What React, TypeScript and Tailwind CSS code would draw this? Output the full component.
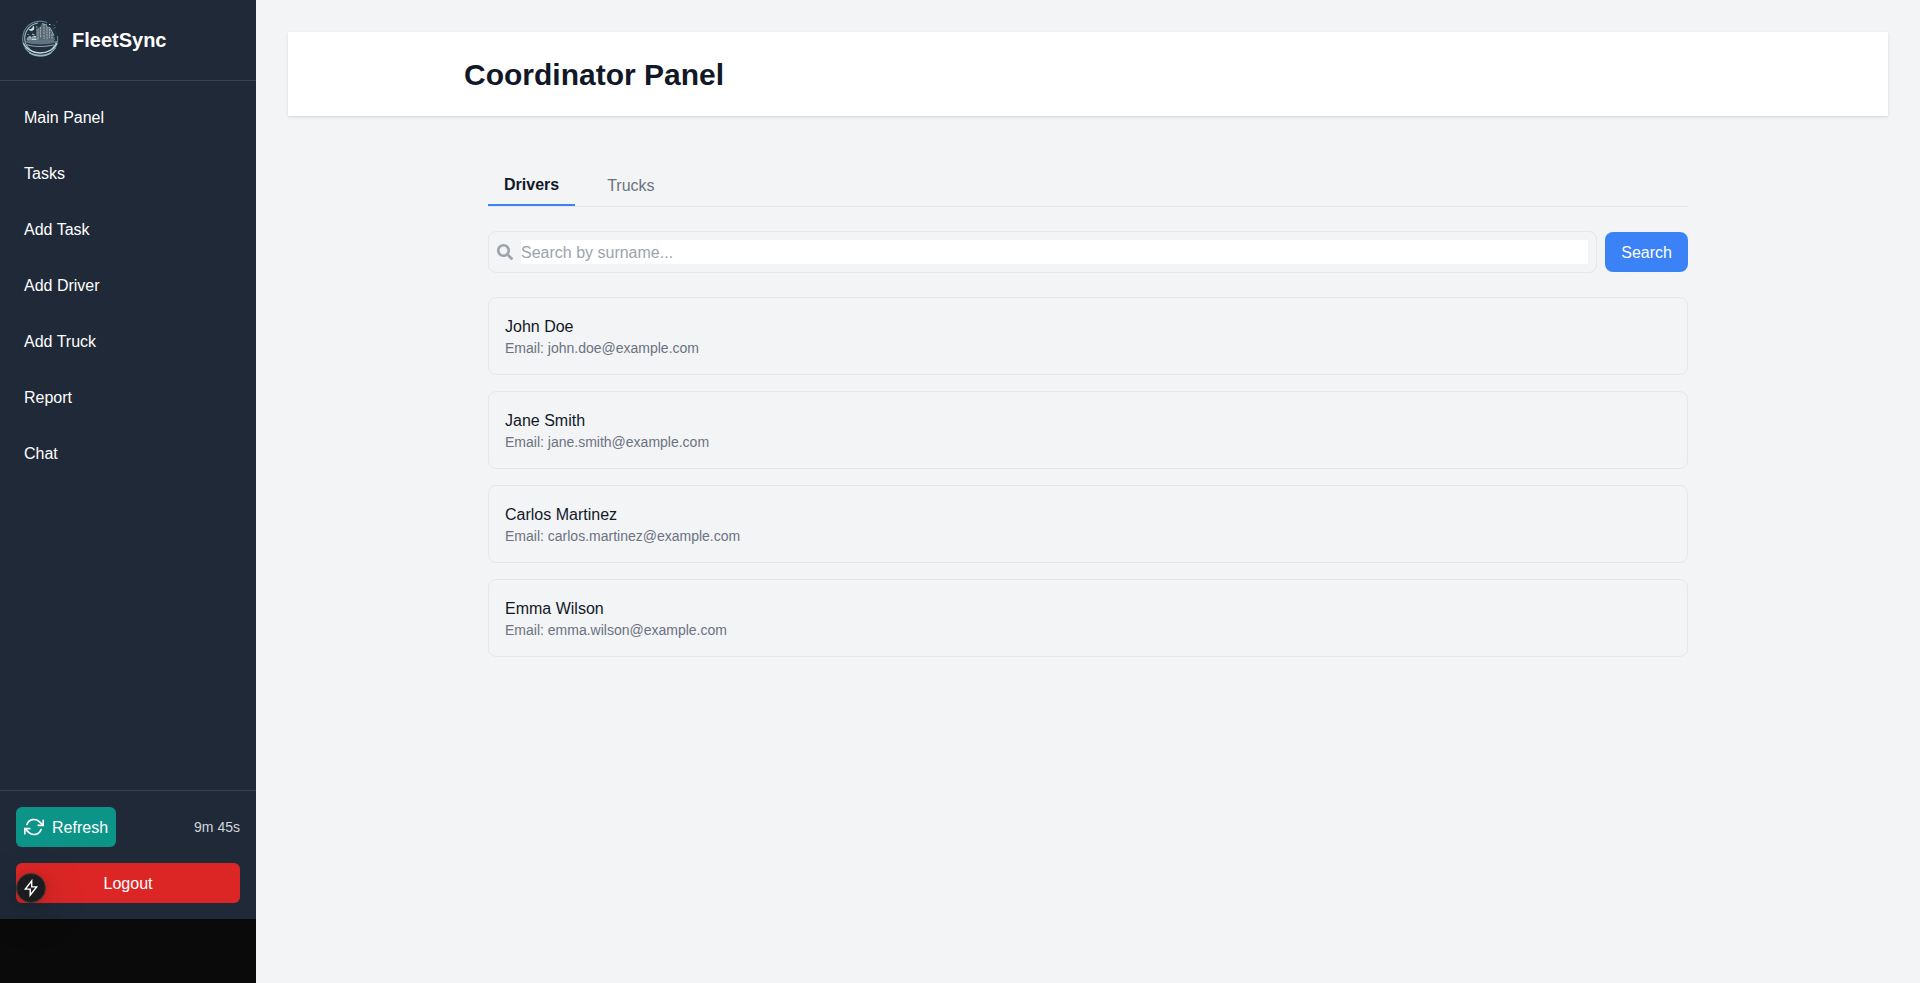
import React from "react";
import { FaSearch } from "react-icons/fa";
import { FiRefreshCw } from "react-icons/fi";

const navItems: string[] = ["Main Panel", "Tasks", "Add Task", "Add Driver", "Add Truck", "Report", "Chat"];

const drivers: { name: string; email: string }[] = [
  { name: "John Doe", email: "john.doe@example.com" },
  { name: "Jane Smith", email: "jane.smith@example.com" },
  { name: "Carlos Martinez", email: "carlos.martinez@example.com" },
  { name: "Emma Wilson", email: "emma.wilson@example.com" },
];

function Logo() {
  return (
    <svg width="48" height="48" viewBox="0 0 48 48" fill="none">
      <circle cx="24.300" cy="23" r="17.500" fill="#22313e" />
      {/* outer rings */}
      <path d="M31 6.500A17.500 17.500 0 1 0 41.500 20" stroke="#607f8b" strokeWidth="1.200" />
      <path d="M22 7A15.500 15.500 0 0 0 8.800 24c2 17 28 18 31.500 1" stroke="#9fb7bf" strokeWidth="1.100" />
      <path d="M7.500 27c4.500 12.500 28 13.500 33.500 0" stroke="#c6d6db" strokeWidth="1.100" />
      <path d="M9 32c6 9 24 10 30.500 0" stroke="#93aeb8" strokeWidth="1" />
      <path d="M13 36.800c6 4 17 4 22.500 0" stroke="#adc3cb" strokeWidth="1" />
      {/* ground */}
      <path d="M9 26.500c9 2.500 21 2.500 31 0l-3-3.500H12z" fill="#5d7380" />
      <path d="M11 28.800c8 2.200 18 2.200 27 0" stroke="#b7c7cd" strokeWidth="0.800" />
      {/* skyline */}
      <path d="M20 24V13l4-2 2-3.500 5 1.500v3l3-.5 3 6 2 5.500v1z" fill="#5a6a75" />
      <path d="M22 13v10M24.500 11V22M28 8v15M31 10v14M33.500 13v9M36 18v5" stroke="#a5b4bb" strokeWidth="0.900" strokeDasharray="2 0.700" />
      <path d="M26 7.500l5 1.500M31 12l3-.5 4 8" stroke="#b9c5ca" strokeWidth="0.700" />
      {/* moon and trees */}
      <path d="M17 9.500a3 3 0 1 1-4.500 3.500 3.500 3.500 0 0 0 4.500-3.500z" fill="#d3dde1" />
      <path d="M10.500 23.500c1-4 4-4 5-2 1-2.500 4-2.500 5 1l2 1.500H10.500z" fill="#8799a3" />
      <path d="M13 21h2M18 20.500h2M16 23.500h4M11.500 18.500h1M20 11h1.500M33 8.500h1.500M16 18l2.500 1" stroke="#d5dee1" strokeWidth="0.900" />
      <path d="M37 9l2 .5M40 6.500l1.500-1M37 13l3-2" stroke="#48626f" strokeWidth="1" />
    </svg>
  );
}

function DevBadge() {
  return (
    <div className="absolute top-[873px] left-4 flex h-[30px] w-[30px] items-center justify-center rounded-full border border-[#3a3b3d] bg-[#1c1c1e] shadow-[0_11px_40px_0_rgba(0,0,0,0.25),0_2px_10px_0_rgba(0,0,0,0.12)]">
      <svg width="18" height="18" viewBox="0 0 16 16" fill="none" stroke="#fff" strokeWidth="1.300">
        <path d="M8.600 1.700 3 9h4.300v5.300L13 7H8.600z" />
      </svg>
    </div>
  );
}

function Sidebar() {
  return (
    <aside className="relative flex h-[919px] w-64 flex-none flex-col bg-[#1f2937] text-white">
      <div className="flex items-center border-b border-[#374151] p-4">
        <Logo />
        <span className="ml-2 text-xl font-bold">FleetSync</span>
      </div>
      <nav className="flex flex-1 flex-col gap-4 p-4">
        {navItems.map((item) => (
          <a key={item} className="px-2 pt-[9px] pb-[7px]">{item}</a>
        ))}
      </nav>
      <div className="border-t border-[#374151] p-4">
        <div className="mb-4 flex items-center justify-between">
          <button className="flex h-10 items-center rounded-md bg-[#0d9488] px-2">
            <FiRefreshCw className="mr-2 h-5 w-5" />
            <span className="pt-0.5">Refresh</span>
          </button>
          <span className="text-sm text-[#d1d5db]">9m 45s</span>
        </div>
        <button className="block w-full rounded-md bg-[#dc2626] px-4 pt-[9px] pb-[7px]">Logout</button>
      </div>
      <DevBadge />
    </aside>
  );
}

export default function App() {
  return (
    <div className="flex h-[983px] overflow-hidden bg-[#0a0a0a] font-['Liberation_Sans',Arial,sans-serif] text-base text-[#111827]">
      <Sidebar />
      <main className="flex-1 bg-[#f3f4f6] p-8">
        <header className="bg-white shadow-[0_1px_3px_0_rgba(0,0,0,0.1),0_1px_2px_-1px_rgba(0,0,0,0.1)]">
          <div className="mx-auto max-w-7xl px-4 pt-[25px] pb-[23px]">
            <h1 className="text-3xl font-bold">Coordinator Panel</h1>
          </div>
        </header>
        <div className="mx-auto mt-12 w-[1200px]">
          <div className="mb-6 flex gap-4 border-b border-[#e5e7eb]">
            <button className="border-b-2 border-[#3b82f6] px-4 pt-[9px] pb-[7px] font-bold">Drivers</button>
            <button className="px-4 pt-[9px] pb-[7px] text-[#6b7280]">Trucks</button>
          </div>
          <div className="mb-6 flex items-center">
            <div className="flex flex-1 items-center rounded-lg border border-[#e5e7eb] p-2">
              <FaSearch className="mr-2 h-4 w-4 text-[#9ca3af]" />
              <input className="h-6 flex-1 bg-white pt-0.5 outline-none placeholder:text-[#9ca3af]" placeholder="Search by surname..." />
            </div>
            <button className="ml-2 rounded-lg bg-[#3b82f6] px-4 pt-[9px] pb-[7px] text-white">Search</button>
          </div>
          <ul className="flex flex-col gap-4">
            {drivers.map((d) => (
              <li key={d.email} className="rounded-lg border border-[#e5e7eb] px-4 pt-[17px] pb-4">
                <p>{d.name}</p>
                <p className="-mt-px text-sm text-[#6b7280]">Email: {d.email}</p>
              </li>
            ))}
          </ul>
        </div>
      </main>
    </div>
  );
}
